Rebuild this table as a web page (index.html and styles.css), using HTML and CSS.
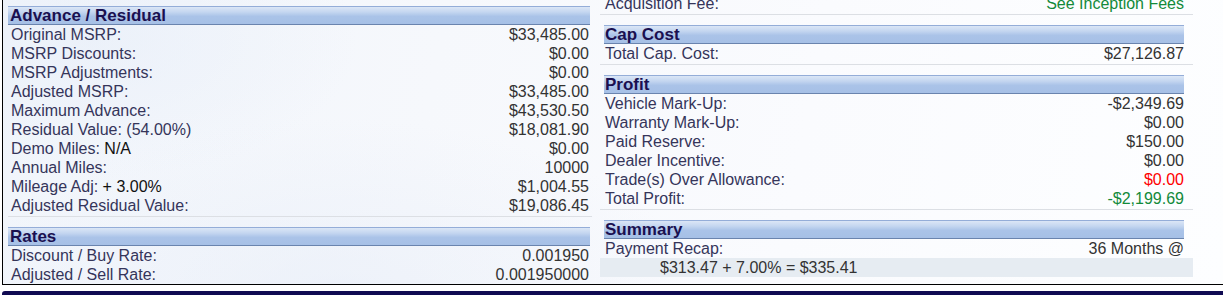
FILE: index.html
```html
<!DOCTYPE html>
<html lang="en">
<head>
<meta charset="utf-8">
<title>Deal Recap</title>
<link rel="stylesheet" href="styles.css">
</head>
<body>
<div class="panel">
  <div class="col col-left">
    <div class="section">
      <div class="bar">Advance / Residual</div>
      <div class="row"><span class="lbl">Original MSRP:</span><span class="val">$33,485.00</span></div>
      <div class="row"><span class="lbl">MSRP Discounts:</span><span class="val">$0.00</span></div>
      <div class="row"><span class="lbl">MSRP Adjustments:</span><span class="val">$0.00</span></div>
      <div class="row"><span class="lbl">Adjusted MSRP:</span><span class="val">$33,485.00</span></div>
      <div class="row"><span class="lbl">Maximum Advance:</span><span class="val">$43,530.50</span></div>
      <div class="row"><span class="lbl">Residual Value: (54.00%)</span><span class="val">$18,081.90</span></div>
      <div class="row"><span class="lbl">Demo Miles: <b class="dark">N/A</b></span><span class="val">$0.00</span></div>
      <div class="row"><span class="lbl">Annual Miles:</span><span class="val">10000</span></div>
      <div class="row"><span class="lbl">Mileage Adj: <b class="dark">+ 3.00%</b></span><span class="val">$1,004.55</span></div>
      <div class="row"><span class="lbl">Adjusted Residual Value:</span><span class="val">$19,086.45</span></div>
      <div class="sep"></div>
    </div>
    <div class="section">
      <div class="bar">Rates</div>
      <div class="row"><span class="lbl">Discount / Buy Rate:</span><span class="val">0.001950</span></div>
      <div class="row"><span class="lbl">Adjusted / Sell Rate:</span><span class="val">0.001950000</span></div>
    </div>
  </div>
  <div class="col col-right">
    <div class="section section-cut">
      <div class="row"><span class="lbl">Acquisition Fee:</span><span class="val green">See Inception Fees</span></div>
      <div class="sep"></div>
    </div>
    <div class="section">
      <div class="bar">Cap Cost</div>
      <div class="row"><span class="lbl">Total Cap. Cost:</span><span class="val">$27,126.87</span></div>
      <div class="sep"></div>
    </div>
    <div class="section">
      <div class="bar">Profit</div>
      <div class="row"><span class="lbl">Vehicle Mark-Up:</span><span class="val">-$2,349.69</span></div>
      <div class="row"><span class="lbl">Warranty Mark-Up:</span><span class="val">$0.00</span></div>
      <div class="row"><span class="lbl">Paid Reserve:</span><span class="val">$150.00</span></div>
      <div class="row"><span class="lbl">Dealer Incentive:</span><span class="val">$0.00</span></div>
      <div class="row"><span class="lbl">Trade(s) Over Allowance:</span><span class="val red">$0.00</span></div>
      <div class="row"><span class="lbl">Total Profit:</span><span class="val green">-$2,199.69</span></div>
      <div class="sep"></div>
    </div>
    <div class="section">
      <div class="bar">Summary</div>
      <div class="row"><span class="lbl">Payment Recap:</span><span class="val">36 Months @</span></div>
      <div class="recap">$313.47 + 7.00% = $335.41</div>
    </div>
  </div>
</div>
<div class="footer-bar"></div>
</body>
</html>
```

FILE: styles.css
```css
html, body {
  margin: 0;
  padding: 0;
  background: #ffffff;
  overflow: hidden;
}

body {
  font-family: "Liberation Sans", Arial, sans-serif;
  font-size: 16px;
  color: #333333;
}

.panel {
  margin-left: 2px;
  height: 284px;
  border-left: 1px solid #000000;
  border-bottom: 1px solid #000000;
  display: flex;
  align-items: flex-start;
  overflow: hidden;
  background:
    radial-gradient(ellipse 520px 260px at 330px 300px, rgba(228, 235, 247, 0.5), rgba(228, 235, 247, 0) 70%),
    radial-gradient(ellipse 380px 200px at 90px 40px, rgba(230, 237, 248, 0.55), rgba(230, 237, 248, 0) 70%),
    linear-gradient(100deg, #f1f5fb 0%, #f6f8fc 35%, #fafbfe 65%, #fdfeff 100%);
}

.col-left {
  margin-left: 5px;
  width: 584px;
  padding-top: 6px;
}

.col-right {
  margin-left: 8px;
  width: 593px;
}

.bar {
  height: 17px;
  line-height: 18px;
  font-size: 17px;
  font-weight: bold;
  color: #1a1050;
  border-top: 1px solid #94add8;
  border-bottom: 1px solid #6a84ae;
  background: linear-gradient(#dbe6f6 0%, #c4d6f0 30%, #aac3e8 55%, #a6c0e6 100%);
  white-space: nowrap;
  overflow: visible;
}

.col-left .bar {
  margin-right: 2px;
  padding-left: 2px;
}

.col-right .bar {
  margin-left: 4px;
  margin-right: 9px;
  padding-left: 1px;
}

.row {
  display: flex;
  justify-content: space-between;
  height: 19px;
  line-height: 19px;
  white-space: nowrap;
}

.col-left .row {
  padding-left: 3px;
  padding-right: 3px;
}

.col-right .row {
  padding-left: 5px;
  padding-right: 9px;
}

.lbl {
  color: #35355a;
}

.dark {
  font-weight: normal;
  color: #111111;
}

.val {
  color: #333333;
  text-align: right;
}

.green {
  color: #138a3a;
}

.red {
  color: #ff0000;
}

.sep {
  height: 1px;
  background: #dcdfe4;
  margin-top: 1px;
  margin-bottom: 10px;
}

.section-cut {
  margin-top: -6px;
}

.recap {
  height: 19px;
  line-height: 19px;
  padding-left: 60px;
  background: #e6ecf2;
  color: #333333;
  white-space: nowrap;
}

.footer-bar {
  margin-top: 6px;
  margin-left: 2px;
  height: 10px;
  background: #100a52;
  border-top-left-radius: 3px;
}
```
